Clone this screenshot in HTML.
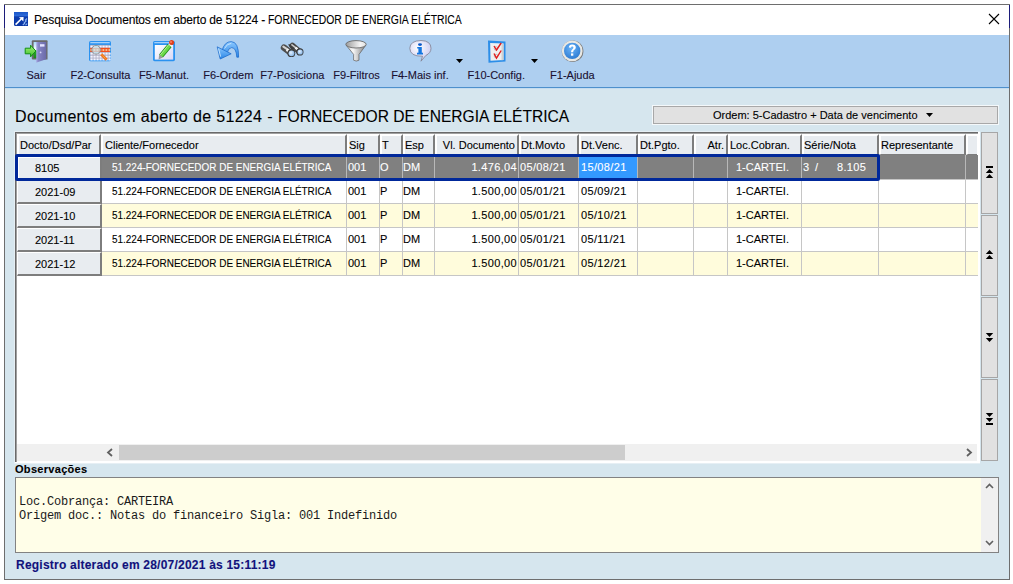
<!DOCTYPE html><html><head><meta charset="utf-8"><style>
*{margin:0;padding:0;box-sizing:border-box}
html,body{width:1013px;height:584px;overflow:hidden;background:#fff;font-family:"Liberation Sans",sans-serif;font-size:11px;color:#000}
.a{position:absolute}
.t{position:absolute;white-space:pre;line-height:13px;font-size:11px;-webkit-text-stroke:0.1px currentColor}
</style></head><body>

<div class="a" style="left:4px;top:4px;width:1006px;height:576px;border:1px solid #6e6e6e;background:#d6e6ee"></div>
<div class="a" style="left:4px;top:5px;width:1px;height:23px;background:#1c1c7a"></div>
<div class="a" style="left:1009px;top:5px;width:1px;height:23px;background:#1c1c7a"></div>
<div class="a" style="left:5px;top:5px;width:1004px;height:30px;background:#fff"></div>
<svg class="a" style="left:14px;top:12px" width="14" height="14" viewBox="0 0 14 14">
<defs><linearGradient id="gti" x1="0" y1="0" x2="0" y2="1"><stop offset="0" stop-color="#1a56c8"/><stop offset="0.28" stop-color="#2e6ad8"/><stop offset="0.34" stop-color="#0c3cae"/><stop offset="1" stop-color="#0a36a4"/></linearGradient></defs>
<path d="M0 0 H14 V14 H1.5 Q0 14 0 12.5 Z" fill="url(#gti)"/>
<path d="M1.6 12.6 L7.2 7" stroke="#fff" stroke-width="1.6"/><path d="M5 5.2 L9.6 5 L9.4 9.6 Z" fill="#fff"/>
<path d="M11 8.5 L13 6.5 M10 11 L12.6 8.6 M8.8 13 L11 11 M11.5 13.2 L13.2 11.6" stroke="#8cb4f0" stroke-width="1.1"/></svg>
<div class="t" style="left:34px;top:12px;font-size:12px;line-height:16px;letter-spacing:-0.18px;color:#000">Pesquisa Documentos em aberto de 51224 - </div>
<div class="t" style="left:268px;top:12px;font-size:12px;line-height:16px;transform:scaleX(0.865);transform-origin:0 0;color:#000">FORNECEDOR DE ENERGIA ELÉTRICA</div>
<svg class="a" style="left:988px;top:13px" width="12" height="12" viewBox="0 0 12 12"><path d="M1 1 L11 11 M11 1 L1 11" stroke="#000" stroke-width="1.1"/></svg>
<div class="a" style="left:5px;top:35px;width:1004px;height:52px;background:#aecff0"></div>
<div class="a" style="left:5px;top:87px;width:1004px;height:1px;background:#4e90cc"></div>
<div class="a" style="left:5px;top:88px;width:1004px;height:1px;background:#c4dcf0"></div>
<div class="t" style="left:-13.7px;top:69px;width:100px;text-align:center;color:#1a1030">Sair</div>
<div class="t" style="left:50.5px;top:69px;width:100px;text-align:center;color:#1a1030">F2-Consulta</div>
<div class="t" style="left:114.0px;top:69px;width:100px;text-align:center;color:#1a1030">F5-Manut.</div>
<div class="t" style="left:178.3px;top:69px;width:100px;text-align:center;color:#1a1030">F6-Ordem</div>
<div class="t" style="left:242.3px;top:69px;width:100px;text-align:center;color:#1a1030">F7-Posiciona</div>
<div class="t" style="left:306.6px;top:69px;width:100px;text-align:center;color:#1a1030">F9-Filtros</div>
<div class="t" style="left:370.0px;top:69px;width:100px;text-align:center;color:#1a1030">F4-Mais inf.</div>
<div class="t" style="left:446.3px;top:69px;width:100px;text-align:center;color:#1a1030">F10-Config.</div>
<div class="t" style="left:522.4px;top:69px;width:100px;text-align:center;color:#1a1030">F1-Ajuda</div>
<svg class="a" style="left:456px;top:59px" width="7" height="4" viewBox="0 0 7 4"><path d="M0 0 L7 0 L3.5 4 Z" fill="#000"/></svg>
<svg class="a" style="left:531px;top:59px" width="7" height="4" viewBox="0 0 7 4"><path d="M0 0 L7 0 L3.5 4 Z" fill="#000"/></svg>
<svg class="a" style="left:0;top:0" width="1013" height="90" viewBox="0 0 1013 90">
<defs>
<linearGradient id="gdoor" x1="0" y1="0" x2="1" y2="0"><stop offset="0" stop-color="#8c8ccc"/><stop offset="1" stop-color="#6a6aa8"/></linearGradient>
<linearGradient id="ggreen" x1="0" y1="0" x2="0" y2="1"><stop offset="0" stop-color="#a6f27a"/><stop offset="1" stop-color="#3cbf2a"/></linearGradient>
<linearGradient id="gpen" x1="0" y1="0" x2="1" y2="1"><stop offset="0" stop-color="#9cf07a"/><stop offset="1" stop-color="#2ea81e"/></linearGradient>
<linearGradient id="gwin" x1="0" y1="0" x2="1" y2="1"><stop offset="0" stop-color="#ffffff"/><stop offset="1" stop-color="#d8d8f6"/></linearGradient>
<linearGradient id="garrow" x1="0" y1="0" x2="0" y2="1"><stop offset="0" stop-color="#8cc8ff"/><stop offset="1" stop-color="#2a86e6"/></linearGradient>
<linearGradient id="gfun" x1="0" y1="0" x2="1" y2="0"><stop offset="0" stop-color="#8a8a8a"/><stop offset="0.5" stop-color="#f2f2f2"/><stop offset="1" stop-color="#9a9a9a"/></linearGradient>
<radialGradient id="ghelp" cx="0.45" cy="0.35" r="0.7"><stop offset="0" stop-color="#6ab4f8"/><stop offset="1" stop-color="#2a78d0"/></radialGradient>
<radialGradient id="glens" cx="0.4" cy="0.4" r="0.6"><stop offset="0" stop-color="#e6f2ff"/><stop offset="1" stop-color="#8ab8e8"/></radialGradient>
<radialGradient id="gbub" cx="0.4" cy="0.35" r="0.7"><stop offset="0" stop-color="#ffffff"/><stop offset="1" stop-color="#c8c8f0"/></radialGradient>
</defs>
<!-- Sair -->
<linearGradient id="gopen" x1="0" y1="0" x2="0" y2="1"><stop offset="0" stop-color="#a8d8f8"/><stop offset="0.5" stop-color="#ffffff"/><stop offset="0.55" stop-color="#2aa82a"/><stop offset="1" stop-color="#1a8a1a"/></linearGradient>
<rect x="31.8" y="40.2" width="15.8" height="19.4" rx="1" fill="#6a6a6a"/>
<rect x="47" y="41.5" width="1" height="18" fill="#8a9ab0" opacity="0.6"/>
<rect x="33.6" y="42" width="12" height="16.2" fill="url(#gopen)"/>
<path d="M36.5 42.1 L46.2 42.1 L46.2 59.3 L36.5 62.4 Z" fill="url(#gdoor)"/>
<path d="M36.5 42.1 L37.3 42.1 L37.3 62.1 L36.5 62.4 Z" fill="#b0b0e8"/>
<rect x="40" y="44.2" width="4.5" height="2.4" fill="#e4e4ff"/>
<circle cx="40.6" cy="52.4" r="0.9" fill="#d8d8f8"/>
<path d="M25.2 48.2 H30.6 V45.2 L35.9 51 L30.6 56.8 V53.8 H25.2 Z" fill="url(#ggreen)" stroke="#109010" stroke-width="1"/>
<!-- F2 Consulta -->
<rect x="89" y="41" width="22" height="20.2" rx="1.6" fill="#2a92f0"/>
<rect x="90.3" y="42.3" width="19.4" height="0.9" fill="#d8ecff"/>
<rect x="90.2" y="44.9" width="19.6" height="14.9" fill="#a4a4bc"/>
<g fill="#f4f4ff"><rect x="90.4" y="45.6" width="2.3" height="2.1"/><rect x="90.4" y="52.6" width="2.3" height="2.1"/><rect x="90.4" y="55.6" width="2.3" height="2.1"/><rect x="90.4" y="58.4" width="2.3" height="2.1"/><rect x="93.4" y="45.6" width="2.3" height="2.1"/><rect x="93.4" y="52.6" width="2.3" height="2.1"/><rect x="93.4" y="55.6" width="2.3" height="2.1"/><rect x="93.4" y="58.4" width="2.3" height="2.1"/><rect x="96.4" y="45.6" width="2.3" height="2.1"/><rect x="96.4" y="52.6" width="2.3" height="2.1"/><rect x="96.4" y="55.6" width="2.3" height="2.1"/><rect x="96.4" y="58.4" width="2.3" height="2.1"/><rect x="99.4" y="45.6" width="2.3" height="2.1"/><rect x="99.4" y="52.6" width="2.3" height="2.1"/><rect x="99.4" y="55.6" width="2.3" height="2.1"/><rect x="99.4" y="58.4" width="2.3" height="2.1"/><rect x="102.4" y="45.6" width="2.3" height="2.1"/><rect x="102.4" y="52.6" width="2.3" height="2.1"/><rect x="102.4" y="55.6" width="2.3" height="2.1"/><rect x="102.4" y="58.4" width="2.3" height="2.1"/><rect x="105.4" y="45.6" width="2.3" height="2.1"/><rect x="105.4" y="52.6" width="2.3" height="2.1"/><rect x="105.4" y="55.6" width="2.3" height="2.1"/><rect x="105.4" y="58.4" width="2.3" height="2.1"/><rect x="108.4" y="45.6" width="2.3" height="2.1"/><rect x="108.4" y="52.6" width="2.3" height="2.1"/><rect x="108.4" y="55.6" width="2.3" height="2.1"/><rect x="108.4" y="58.4" width="2.3" height="2.1"/></g>
<rect x="90.2" y="47.8" width="19.6" height="4.2" fill="#f2501e"/>
<g fill="#f8c898"><rect x="90.5" y="49.1" width="1.8" height="1.8"/><rect x="93.5" y="49.1" width="1.8" height="1.8"/><rect x="96.5" y="49.1" width="1.8" height="1.8"/><rect x="99.5" y="49.1" width="1.8" height="1.8"/><rect x="102.5" y="49.1" width="1.8" height="1.8"/><rect x="105.5" y="49.1" width="1.8" height="1.8"/><rect x="108.5" y="49.1" width="1.8" height="1.8"/></g>
<circle cx="96.1" cy="49.8" r="4.3" fill="#c8ecf8" fill-opacity="0.7" stroke="#8c8c8c" stroke-width="0.9"/>
<path d="M101.2 54.2 L106.6 59.8" stroke="#f07020" stroke-width="2.8"/>
<path d="M101.6 54.4 L106.2 59.2" stroke="#f8d848" stroke-width="0.9" stroke-dasharray="1.2 0.8"/>
<!-- F5 Manut -->
<rect x="153" y="41" width="22" height="20.2" rx="1.6" fill="#2a92f0"/>
<rect x="154.3" y="42.3" width="19.4" height="0.9" fill="#d8ecff"/>
<rect x="154.8" y="45" width="18.4" height="14.6" fill="url(#gwin)"/>
<path d="M161 56 L169.6 45.6" stroke="#1e8a14" stroke-width="5" stroke-linecap="butt"/>
<path d="M161 56 L169.6 45.6" stroke="#6cd84a" stroke-width="3.4"/>
<path d="M160.3 55 L168.6 44.8" stroke="#b0f490" stroke-width="1"/>
<path d="M159.2 54.6 L162.8 57.6 L158.6 59.6 Z" fill="#9a9a9a"/>
<path d="M168.4 44.2 L171.2 46.6 L172.4 45.2 L169.6 42.8 Z" fill="#f4f4f4"/>
<circle cx="171.6" cy="42.6" r="2.5" fill="#e2401c"/>
<circle cx="171" cy="42" r="1" fill="#f88060"/>
<!-- F6 Ordem -->
<path d="M222 50.5 Q224.5 41.6 231.2 41.6 Q238.8 41.8 238.6 57.2 L236.8 57.2 Q236.2 47.6 231.6 47.6 Q228.6 47.6 227.2 52.8 Z" fill="url(#garrow)" stroke="#1464c8" stroke-width="0.7"/>
<path d="M224.5 48.5 Q227 43.5 231.2 43.4" stroke="#c4e4ff" stroke-width="1" fill="none"/>
<path d="M217.2 46.8 L231.2 53.8 L220.2 59 Z" fill="url(#garrow)" stroke="#1464c8" stroke-width="0.7"/>
<path d="M218.6 48.6 L220.6 56.6" stroke="#c4e4ff" stroke-width="1"/>
<!-- F7 binoculars -->
<path d="M284 47.6 L291 53" stroke="#4e4e4e" stroke-width="6.4" stroke-linecap="round"/>
<path d="M292.5 45.8 L299.6 51.8" stroke="#4e4e4e" stroke-width="6" stroke-linecap="round"/>
<path d="M288 44.5 L294 43.8 L297 47 L292 50 Z" fill="#3c3c3c"/>
<path d="M283.3 46.6 L288.6 50.2" stroke="#d4d4d4" stroke-width="2" stroke-linecap="round"/>
<path d="M292 44.9 L296.6 48.4" stroke="#c8c8c8" stroke-width="1.8" stroke-linecap="round"/>
<path d="M286.6 49.6 L289.2 51.6" stroke="#f4f4f4" stroke-width="2.6"/>
<path d="M295.4 47.6 L297.6 49.4" stroke="#f0f0f0" stroke-width="2.4"/>
<circle cx="291.3" cy="53.2" r="3.9" fill="#3a3a3a"/>
<circle cx="299.9" cy="51.9" r="3.6" fill="#3a3a3a"/>
<circle cx="291.5" cy="53.3" r="2.9" fill="url(#glens)"/>
<circle cx="300.1" cy="52" r="2.6" fill="url(#glens)"/>
<!-- F9 funnel -->
<linearGradient id="gfun2" x1="0" y1="0" x2="1" y2="0"><stop offset="0" stop-color="#9c9c9c"/><stop offset="0.7" stop-color="#f4f4f4"/><stop offset="1" stop-color="#e0e0e0"/></linearGradient>
<linearGradient id="gcone" x1="0" y1="0" x2="1" y2="0"><stop offset="0" stop-color="#d0d0d0"/><stop offset="0.35" stop-color="#f8f8f8"/><stop offset="1" stop-color="#7c7c7c"/></linearGradient>
<path d="M346 45 L353.6 54.4 V60.2 Q356.3 61.9 359 60.2 V54.4 L366 45 Z" fill="url(#gcone)" stroke="#5c5c5c" stroke-width="0.7"/>
<ellipse cx="356" cy="44.3" rx="10.2" ry="3.7" fill="url(#gfun2)" stroke="#6a6a6a" stroke-width="0.9"/>
<!-- F4 info -->
<path d="M421 40.5 Q431 40.8 431 48.3 Q431 53 425.8 55.5 L421 61.2 L422.5 56.2 Q410 56.5 409.8 48.3 Q410 40.8 421 40.5 Z" fill="url(#gbub)" stroke="#808090" stroke-width="0.8"/>
<ellipse cx="420" cy="44.6" rx="2" ry="1.3" fill="#0a56c8"/>
<path d="M417.2 47 H421.8 V52.8 H423 V54.4 H417 V52.8 H418.4 V48.4 H417.2 Z" fill="#1476e0"/>
<!-- F10 config -->
<path d="M488 40.5 L505.5 41.5 L505.5 61.5 L488.5 62.8 Z" fill="#2c8ee8"/>
<path d="M490.2 43 L503.5 43.6 L503.5 60 L490.5 60.8 Z" fill="#f0f0f0"/>
<path d="M503.5 43.6 L503.5 60 L501.5 60.2 L501.5 43.5 Z" fill="#d0d0d0"/>
<ellipse cx="496" cy="48.5" rx="1.8" ry="1.8" fill="none" stroke="#b8b8b8" stroke-width="0.8"/>
<ellipse cx="496" cy="56" rx="1.8" ry="1.8" fill="none" stroke="#b8b8b8" stroke-width="0.8"/>
<path d="M494 46 L496.5 50 L501.2 43" fill="none" stroke="#e41a1a" stroke-width="1.4"/>
<path d="M494 53.5 L496.5 58 L501.2 50.5" fill="none" stroke="#e41a1a" stroke-width="1.4"/>
<!-- F1 help -->
<circle cx="572.6" cy="51.2" r="10.8" fill="#7a7a7a"/>
<circle cx="572.2" cy="50.9" r="10.4" fill="#e8e8e4"/>
<circle cx="572.2" cy="50.9" r="8.2" fill="url(#ghelp)"/>
<path d="M568.8 47.6 Q569 44.6 572.2 44.6 Q575.8 44.6 575.8 47.6 Q575.8 49.3 573.8 50.3 Q573.2 50.8 573.2 52.2 H571 Q571 50 572.4 49.2 Q573.4 48.6 573.4 47.6 Q573.4 46.6 572.2 46.6 Q571 46.6 571 47.8 Z" fill="#fff"/>
<rect x="571" y="53.4" width="2.3" height="2.3" fill="#fff"/>
</svg>

<div class="t" style="left:15px;top:107px;font-size:16px;line-height:20px;letter-spacing:0.34px;color:#000">Documentos em aberto de 51224 - </div>
<div class="t" style="left:277.5px;top:107px;font-size:16px;line-height:20px;transform:scaleX(0.975);transform-origin:0 0;color:#000">FORNECEDOR DE ENERGIA ELÉTRICA</div>
<div class="a" style="left:652px;top:105px;width:347px;height:20px;background:#f4f8fa"></div>
<div class="a" style="left:653px;top:106px;width:345px;height:18px;border:1px solid #a8a8a8;background:#e1e1e1"></div>
<div class="t" style="left:713px;top:109px;color:#000">Ordem: 5-Cadastro + Data de vencimento</div>
<svg class="a" style="left:926px;top:113px" width="7" height="4" viewBox="0 0 7 4"><path d="M0 0 L7 0 L3.5 4 Z" fill="#000"/></svg>
<div class="a" style="left:14px;top:131px;width:966px;height:333px;background:#e6eff4"></div>
<div class="a" style="left:15px;top:132px;width:965px;height:331px;background:#fff"></div>
<div class="a" style="left:15px;top:132px;width:963px;height:1px;background:#6a6a6a"></div>
<div class="a" style="left:16px;top:133px;width:962px;height:1px;background:#a0a0a0"></div>
<div class="a" style="left:15px;top:132px;width:1px;height:330px;background:#6a6a6a"></div>
<div class="a" style="left:16px;top:133px;width:1px;height:329px;background:#a0a0a0"></div>
<div class="a" style="left:17px;top:134px;width:84px;height:21px;background:#e8ecf0;border-top:2px solid #fff;border-left:2px solid #fff;border-bottom:1px solid #7d7d7d;border-right:2px solid #7d7d7d;"></div>
<div class="a" style="left:101px;top:134px;width:246px;height:21px;background:#e8ecf0;border-top:2px solid #fff;border-left:2px solid #fff;border-bottom:1px solid #7d7d7d;border-right:2px solid #7d7d7d;"></div>
<div class="a" style="left:347px;top:134px;width:33px;height:21px;background:#e8ecf0;border-top:2px solid #fff;border-left:2px solid #fff;border-bottom:1px solid #7d7d7d;border-right:2px solid #7d7d7d;"></div>
<div class="a" style="left:380px;top:134px;width:23px;height:21px;background:#e8ecf0;border-top:2px solid #fff;border-left:2px solid #fff;border-bottom:1px solid #7d7d7d;border-right:2px solid #7d7d7d;"></div>
<div class="a" style="left:403px;top:134px;width:32px;height:21px;background:#e8ecf0;border-top:2px solid #fff;border-left:2px solid #fff;border-bottom:1px solid #7d7d7d;border-right:2px solid #7d7d7d;"></div>
<div class="a" style="left:435px;top:134px;width:84px;height:21px;background:#e8ecf0;border-top:2px solid #fff;border-left:2px solid #fff;border-bottom:1px solid #7d7d7d;border-right:2px solid #7d7d7d;"></div>
<div class="a" style="left:519px;top:134px;width:60px;height:21px;background:#e8ecf0;border-top:2px solid #fff;border-left:2px solid #fff;border-bottom:1px solid #7d7d7d;border-right:2px solid #7d7d7d;"></div>
<div class="a" style="left:579px;top:134px;width:59px;height:21px;background:#e8ecf0;border-top:2px solid #fff;border-left:2px solid #fff;border-bottom:1px solid #7d7d7d;border-right:2px solid #7d7d7d;"></div>
<div class="a" style="left:638px;top:134px;width:56px;height:21px;background:#e8ecf0;border-top:2px solid #fff;border-left:2px solid #fff;border-bottom:1px solid #7d7d7d;border-right:2px solid #7d7d7d;"></div>
<div class="a" style="left:694px;top:134px;width:34px;height:21px;background:#e8ecf0;border-top:2px solid #fff;border-left:2px solid #fff;border-bottom:1px solid #7d7d7d;border-right:2px solid #7d7d7d;"></div>
<div class="a" style="left:728px;top:134px;width:74px;height:21px;background:#e8ecf0;border-top:2px solid #fff;border-left:2px solid #fff;border-bottom:1px solid #7d7d7d;border-right:2px solid #7d7d7d;"></div>
<div class="a" style="left:802px;top:134px;width:77px;height:21px;background:#e8ecf0;border-top:2px solid #fff;border-left:2px solid #fff;border-bottom:1px solid #7d7d7d;border-right:2px solid #7d7d7d;"></div>
<div class="a" style="left:879px;top:134px;width:87px;height:21px;background:#e8ecf0;border-top:2px solid #fff;border-left:2px solid #fff;border-bottom:1px solid #7d7d7d;border-right:2px solid #7d7d7d;"></div>
<div class="a" style="left:966px;top:134px;width:11px;height:21px;background:#e8ecf0;border-top:2px solid #fff;border-left:2px solid #fff;border-bottom:1px solid #7d7d7d;"></div>
<div class="t" style="left:20px;top:139px">Docto/Dsd/Par</div>
<div class="t" style="left:105px;top:139px">Cliente/Fornecedor</div>
<div class="t" style="left:349px;top:139px">Sig</div>
<div class="t" style="left:382px;top:139px">T</div>
<div class="t" style="left:405px;top:139px">Esp</div>
<div class="t" style="left:415px;top:139px;width:100px;text-align:right">Vl. Documento</div>
<div class="t" style="left:521px;top:139px">Dt.Movto</div>
<div class="t" style="left:581px;top:139px">Dt.Venc.</div>
<div class="t" style="left:640px;top:139px">Dt.Pgto.</div>
<div class="t" style="left:624px;top:139px;width:100px;text-align:right">Atr.</div>
<div class="t" style="left:730px;top:139px">Loc.Cobran.</div>
<div class="t" style="left:804px;top:139px">Série/Nota</div>
<div class="t" style="left:881px;top:139px">Representante</div>
<div class="a" style="left:17px;top:155px;width:85px;height:25px;background:#e8ecf0;border-top:1px solid #fff;border-left:1px solid #fff;border-right:2px solid #7d7d7d;border-bottom:2px solid #7d7d7d"></div>
<div class="a" style="left:102px;top:155px;width:876px;height:24px;background:#808080"></div>
<div class="a" style="left:102px;top:179px;width:876px;height:1px;background:#c6c6c6"></div>
<div class="a" style="left:346px;top:155px;width:1px;height:24px;background:#b8b8b8"></div>
<div class="a" style="left:379px;top:155px;width:1px;height:24px;background:#b8b8b8"></div>
<div class="a" style="left:402px;top:155px;width:1px;height:24px;background:#b8b8b8"></div>
<div class="a" style="left:434px;top:155px;width:1px;height:24px;background:#b8b8b8"></div>
<div class="a" style="left:518px;top:155px;width:1px;height:24px;background:#b8b8b8"></div>
<div class="a" style="left:578px;top:155px;width:1px;height:24px;background:#b8b8b8"></div>
<div class="a" style="left:637px;top:155px;width:1px;height:24px;background:#b8b8b8"></div>
<div class="a" style="left:693px;top:155px;width:1px;height:24px;background:#b8b8b8"></div>
<div class="a" style="left:727px;top:155px;width:1px;height:24px;background:#b8b8b8"></div>
<div class="a" style="left:801px;top:155px;width:1px;height:24px;background:#b8b8b8"></div>
<div class="a" style="left:878px;top:155px;width:1px;height:24px;background:#b8b8b8"></div>
<div class="a" style="left:965px;top:155px;width:1px;height:24px;background:#b8b8b8"></div>
<div class="a" style="left:579px;top:155px;width:58px;height:24px;background:#3399ff"></div>
<div class="t" style="left:35px;top:162px;color:#000">8105</div>
<div class="t" style="left:112px;top:161px;color:#fff; transform:scaleX(0.904);transform-origin:0 0;">51.224-FORNECEDOR DE ENERGIA ELÉTRICA</div>
<div class="t" style="left:348px;top:161px;color:#fff;">001</div>
<div class="t" style="left:380px;top:161px;color:#fff;">O</div>
<div class="t" style="left:403px;top:161px;color:#fff;">DM</div>
<div class="t" style="left:417px;top:161px;width:100px;text-align:right;color:#fff;letter-spacing:0.35px">1.476,04</div>
<div class="t" style="left:520px;top:161px;color:#fff; letter-spacing:0.35px;">05/08/21</div>
<div class="t" style="left:581px;top:161px;color:#fff; letter-spacing:0.35px;">15/08/21</div>
<div class="t" style="left:736px;top:161px;color:#fff;">1-CARTEI.</div>
<div class="t" style="left:803px;top:161px;color:#fff;">3</div>
<div class="a" style="left:17px;top:180px;width:85px;height:24px;background:#e8ecf0;border-top:1px solid #fff;border-left:1px solid #fff;border-right:2px solid #7d7d7d;border-bottom:2px solid #7d7d7d"></div>
<div class="a" style="left:102px;top:180px;width:876px;height:23px;background:#ffffff"></div>
<div class="a" style="left:102px;top:203px;width:876px;height:1px;background:#c6c6c6"></div>
<div class="a" style="left:346px;top:180px;width:1px;height:23px;background:#c6c6c6"></div>
<div class="a" style="left:379px;top:180px;width:1px;height:23px;background:#c6c6c6"></div>
<div class="a" style="left:402px;top:180px;width:1px;height:23px;background:#c6c6c6"></div>
<div class="a" style="left:434px;top:180px;width:1px;height:23px;background:#c6c6c6"></div>
<div class="a" style="left:518px;top:180px;width:1px;height:23px;background:#c6c6c6"></div>
<div class="a" style="left:578px;top:180px;width:1px;height:23px;background:#c6c6c6"></div>
<div class="a" style="left:637px;top:180px;width:1px;height:23px;background:#c6c6c6"></div>
<div class="a" style="left:693px;top:180px;width:1px;height:23px;background:#c6c6c6"></div>
<div class="a" style="left:727px;top:180px;width:1px;height:23px;background:#c6c6c6"></div>
<div class="a" style="left:801px;top:180px;width:1px;height:23px;background:#c6c6c6"></div>
<div class="a" style="left:878px;top:180px;width:1px;height:23px;background:#c6c6c6"></div>
<div class="a" style="left:965px;top:180px;width:1px;height:23px;background:#c6c6c6"></div>
<div class="t" style="left:35px;top:186px;color:#000">2021-09</div>
<div class="t" style="left:112px;top:185px;color:#000; transform:scaleX(0.904);transform-origin:0 0;">51.224-FORNECEDOR DE ENERGIA ELÉTRICA</div>
<div class="t" style="left:348px;top:185px;color:#000;">001</div>
<div class="t" style="left:380px;top:185px;color:#000;">P</div>
<div class="t" style="left:403px;top:185px;color:#000;">DM</div>
<div class="t" style="left:417px;top:185px;width:100px;text-align:right;color:#000;letter-spacing:0.35px">1.500,00</div>
<div class="t" style="left:520px;top:185px;color:#000; letter-spacing:0.35px;">05/01/21</div>
<div class="t" style="left:581px;top:185px;color:#000; letter-spacing:0.35px;">05/09/21</div>
<div class="t" style="left:736px;top:185px;color:#000;">1-CARTEI.</div>
<div class="a" style="left:17px;top:204px;width:85px;height:24px;background:#e8ecf0;border-top:1px solid #fff;border-left:1px solid #fff;border-right:2px solid #7d7d7d;border-bottom:2px solid #7d7d7d"></div>
<div class="a" style="left:102px;top:204px;width:876px;height:23px;background:#fffcdc"></div>
<div class="a" style="left:102px;top:227px;width:876px;height:1px;background:#c6c6c6"></div>
<div class="a" style="left:346px;top:204px;width:1px;height:23px;background:#c6c6c6"></div>
<div class="a" style="left:379px;top:204px;width:1px;height:23px;background:#c6c6c6"></div>
<div class="a" style="left:402px;top:204px;width:1px;height:23px;background:#c6c6c6"></div>
<div class="a" style="left:434px;top:204px;width:1px;height:23px;background:#c6c6c6"></div>
<div class="a" style="left:518px;top:204px;width:1px;height:23px;background:#c6c6c6"></div>
<div class="a" style="left:578px;top:204px;width:1px;height:23px;background:#c6c6c6"></div>
<div class="a" style="left:637px;top:204px;width:1px;height:23px;background:#c6c6c6"></div>
<div class="a" style="left:693px;top:204px;width:1px;height:23px;background:#c6c6c6"></div>
<div class="a" style="left:727px;top:204px;width:1px;height:23px;background:#c6c6c6"></div>
<div class="a" style="left:801px;top:204px;width:1px;height:23px;background:#c6c6c6"></div>
<div class="a" style="left:878px;top:204px;width:1px;height:23px;background:#c6c6c6"></div>
<div class="a" style="left:965px;top:204px;width:1px;height:23px;background:#c6c6c6"></div>
<div class="t" style="left:35px;top:210px;color:#000">2021-10</div>
<div class="t" style="left:112px;top:209px;color:#000; transform:scaleX(0.904);transform-origin:0 0;">51.224-FORNECEDOR DE ENERGIA ELÉTRICA</div>
<div class="t" style="left:348px;top:209px;color:#000;">001</div>
<div class="t" style="left:380px;top:209px;color:#000;">P</div>
<div class="t" style="left:403px;top:209px;color:#000;">DM</div>
<div class="t" style="left:417px;top:209px;width:100px;text-align:right;color:#000;letter-spacing:0.35px">1.500,00</div>
<div class="t" style="left:520px;top:209px;color:#000; letter-spacing:0.35px;">05/01/21</div>
<div class="t" style="left:581px;top:209px;color:#000; letter-spacing:0.35px;">05/10/21</div>
<div class="t" style="left:736px;top:209px;color:#000;">1-CARTEI.</div>
<div class="a" style="left:17px;top:228px;width:85px;height:24px;background:#e8ecf0;border-top:1px solid #fff;border-left:1px solid #fff;border-right:2px solid #7d7d7d;border-bottom:2px solid #7d7d7d"></div>
<div class="a" style="left:102px;top:228px;width:876px;height:23px;background:#ffffff"></div>
<div class="a" style="left:102px;top:251px;width:876px;height:1px;background:#c6c6c6"></div>
<div class="a" style="left:346px;top:228px;width:1px;height:23px;background:#c6c6c6"></div>
<div class="a" style="left:379px;top:228px;width:1px;height:23px;background:#c6c6c6"></div>
<div class="a" style="left:402px;top:228px;width:1px;height:23px;background:#c6c6c6"></div>
<div class="a" style="left:434px;top:228px;width:1px;height:23px;background:#c6c6c6"></div>
<div class="a" style="left:518px;top:228px;width:1px;height:23px;background:#c6c6c6"></div>
<div class="a" style="left:578px;top:228px;width:1px;height:23px;background:#c6c6c6"></div>
<div class="a" style="left:637px;top:228px;width:1px;height:23px;background:#c6c6c6"></div>
<div class="a" style="left:693px;top:228px;width:1px;height:23px;background:#c6c6c6"></div>
<div class="a" style="left:727px;top:228px;width:1px;height:23px;background:#c6c6c6"></div>
<div class="a" style="left:801px;top:228px;width:1px;height:23px;background:#c6c6c6"></div>
<div class="a" style="left:878px;top:228px;width:1px;height:23px;background:#c6c6c6"></div>
<div class="a" style="left:965px;top:228px;width:1px;height:23px;background:#c6c6c6"></div>
<div class="t" style="left:35px;top:234px;color:#000">2021-11</div>
<div class="t" style="left:112px;top:233px;color:#000; transform:scaleX(0.904);transform-origin:0 0;">51.224-FORNECEDOR DE ENERGIA ELÉTRICA</div>
<div class="t" style="left:348px;top:233px;color:#000;">001</div>
<div class="t" style="left:380px;top:233px;color:#000;">P</div>
<div class="t" style="left:403px;top:233px;color:#000;">DM</div>
<div class="t" style="left:417px;top:233px;width:100px;text-align:right;color:#000;letter-spacing:0.35px">1.500,00</div>
<div class="t" style="left:520px;top:233px;color:#000; letter-spacing:0.35px;">05/01/21</div>
<div class="t" style="left:581px;top:233px;color:#000; letter-spacing:0.35px;">05/11/21</div>
<div class="t" style="left:736px;top:233px;color:#000;">1-CARTEI.</div>
<div class="a" style="left:17px;top:252px;width:85px;height:24px;background:#e8ecf0;border-top:1px solid #fff;border-left:1px solid #fff;border-right:2px solid #7d7d7d;border-bottom:2px solid #7d7d7d"></div>
<div class="a" style="left:102px;top:252px;width:876px;height:23px;background:#fffcdc"></div>
<div class="a" style="left:102px;top:275px;width:876px;height:1px;background:#c6c6c6"></div>
<div class="a" style="left:346px;top:252px;width:1px;height:23px;background:#c6c6c6"></div>
<div class="a" style="left:379px;top:252px;width:1px;height:23px;background:#c6c6c6"></div>
<div class="a" style="left:402px;top:252px;width:1px;height:23px;background:#c6c6c6"></div>
<div class="a" style="left:434px;top:252px;width:1px;height:23px;background:#c6c6c6"></div>
<div class="a" style="left:518px;top:252px;width:1px;height:23px;background:#c6c6c6"></div>
<div class="a" style="left:578px;top:252px;width:1px;height:23px;background:#c6c6c6"></div>
<div class="a" style="left:637px;top:252px;width:1px;height:23px;background:#c6c6c6"></div>
<div class="a" style="left:693px;top:252px;width:1px;height:23px;background:#c6c6c6"></div>
<div class="a" style="left:727px;top:252px;width:1px;height:23px;background:#c6c6c6"></div>
<div class="a" style="left:801px;top:252px;width:1px;height:23px;background:#c6c6c6"></div>
<div class="a" style="left:878px;top:252px;width:1px;height:23px;background:#c6c6c6"></div>
<div class="a" style="left:965px;top:252px;width:1px;height:23px;background:#c6c6c6"></div>
<div class="t" style="left:35px;top:258px;color:#000">2021-12</div>
<div class="t" style="left:112px;top:257px;color:#000; transform:scaleX(0.904);transform-origin:0 0;">51.224-FORNECEDOR DE ENERGIA ELÉTRICA</div>
<div class="t" style="left:348px;top:257px;color:#000;">001</div>
<div class="t" style="left:380px;top:257px;color:#000;">P</div>
<div class="t" style="left:403px;top:257px;color:#000;">DM</div>
<div class="t" style="left:417px;top:257px;width:100px;text-align:right;color:#000;letter-spacing:0.35px">1.500,00</div>
<div class="t" style="left:520px;top:257px;color:#000; letter-spacing:0.35px;">05/01/21</div>
<div class="t" style="left:581px;top:257px;color:#000; letter-spacing:0.35px;">05/12/21</div>
<div class="t" style="left:736px;top:257px;color:#000;">1-CARTEI.</div>
<div class="t" style="left:837px;top:161px;color:#fff;letter-spacing:0.35px">8.105</div>
<div class="t" style="left:815px;top:161px;color:#fff">/</div>
<div class="a" style="left:18px;top:157px;width:82px;height:21px;border-top:1px solid #fff;border-left:1px solid #fff"></div>
<div class="a" style="left:15px;top:154px;width:865px;height:27px;border:3px solid #00289a;border-radius:2px"></div>
<div class="a" style="left:17px;top:444px;width:960px;height:17px;background:#f0f0f0"></div>
<svg class="a" style="left:106px;top:448px" width="8" height="9" viewBox="0 0 8 9"><path d="M6 1 L2 4.5 L6 8" stroke="#606060" stroke-width="1.8" fill="none"/></svg>
<div class="a" style="left:119px;top:445px;width:506px;height:15px;background:#cdcdcd"></div>
<svg class="a" style="left:965px;top:448px" width="8" height="9" viewBox="0 0 8 9"><path d="M2 1 L6 4.5 L2 8" stroke="#606060" stroke-width="1.8" fill="none"/></svg>
<div class="a" style="left:981px;top:132px;width:17px;height:82px;background:#e1e1e1;border:1px solid #a6a6a6"></div>
<svg class="a" style="left:986px;top:166px;overflow:visible" width="7" height="12" viewBox="0 0 7 12"><rect x="0" y="0" width="7" height="2" fill="#000"/><path d="M-0.2 7 L3.5 3 L7.2 7Z M-0.2 12 L3.5 8 L7.2 12Z" fill="#000"/></svg>
<div class="a" style="left:981px;top:215px;width:17px;height:81px;background:#e1e1e1;border:1px solid #a6a6a6"></div>
<svg class="a" style="left:986px;top:250px;overflow:visible" width="7" height="12" viewBox="0 0 7 12"><path d="M-0.2 4 L3.5 0 L7.2 4Z M-0.2 9 L3.5 5 L7.2 9Z" fill="#000"/></svg>
<div class="a" style="left:981px;top:297px;width:17px;height:81px;background:#e1e1e1;border:1px solid #a6a6a6"></div>
<svg class="a" style="left:986px;top:333px;overflow:visible" width="7" height="12" viewBox="0 0 7 12"><path d="M-0.2 0 L3.5 4 L7.2 0Z M-0.2 5 L3.5 9 L7.2 5Z" fill="#000"/></svg>
<div class="a" style="left:981px;top:379px;width:17px;height:82px;background:#e1e1e1;border:1px solid #a6a6a6"></div>
<svg class="a" style="left:986px;top:413px;overflow:visible" width="7" height="12" viewBox="0 0 7 12"><path d="M-0.2 0 L3.5 4 L7.2 0Z M-0.2 5 L3.5 9 L7.2 5Z" fill="#000"/><rect x="0" y="10" width="7" height="2" fill="#000"/></svg>
<div class="t" style="left:15px;top:463px;font-weight:bold;letter-spacing:0.3px;color:#000">Observações</div>
<div class="a" style="left:15px;top:477px;width:984px;height:76px;background:#fffee8;border:1px solid #828282"></div>
<div class="a" style="left:981px;top:478px;width:17px;height:74px;background:#f0f0f0"></div>
<svg class="a" style="left:985px;top:483px" width="9" height="6" viewBox="0 0 9 6"><path d="M1 5 L4.5 1.5 L8 5" stroke="#606060" stroke-width="1.6" fill="none"/></svg>
<svg class="a" style="left:985px;top:540px" width="9" height="6" viewBox="0 0 9 6"><path d="M1 1 L4.5 4.5 L8 1" stroke="#606060" stroke-width="1.6" fill="none"/></svg>
<div class="t" style="left:19px;top:495px;font-family:'Liberation Mono',monospace;font-size:12px;letter-spacing:-0.2px;line-height:14px;-webkit-text-stroke:0;color:#1a1a1a">Loc.Cobrança: CARTEIRA
Origem doc.: Notas do financeiro Sigla: 001 Indefinido</div>
<div class="t" style="left:16px;top:559px;font-weight:bold;font-size:12px;letter-spacing:0.22px;color:#12127c">Registro alterado em 28/07/2021 às 15:11:19</div>
</body></html>
